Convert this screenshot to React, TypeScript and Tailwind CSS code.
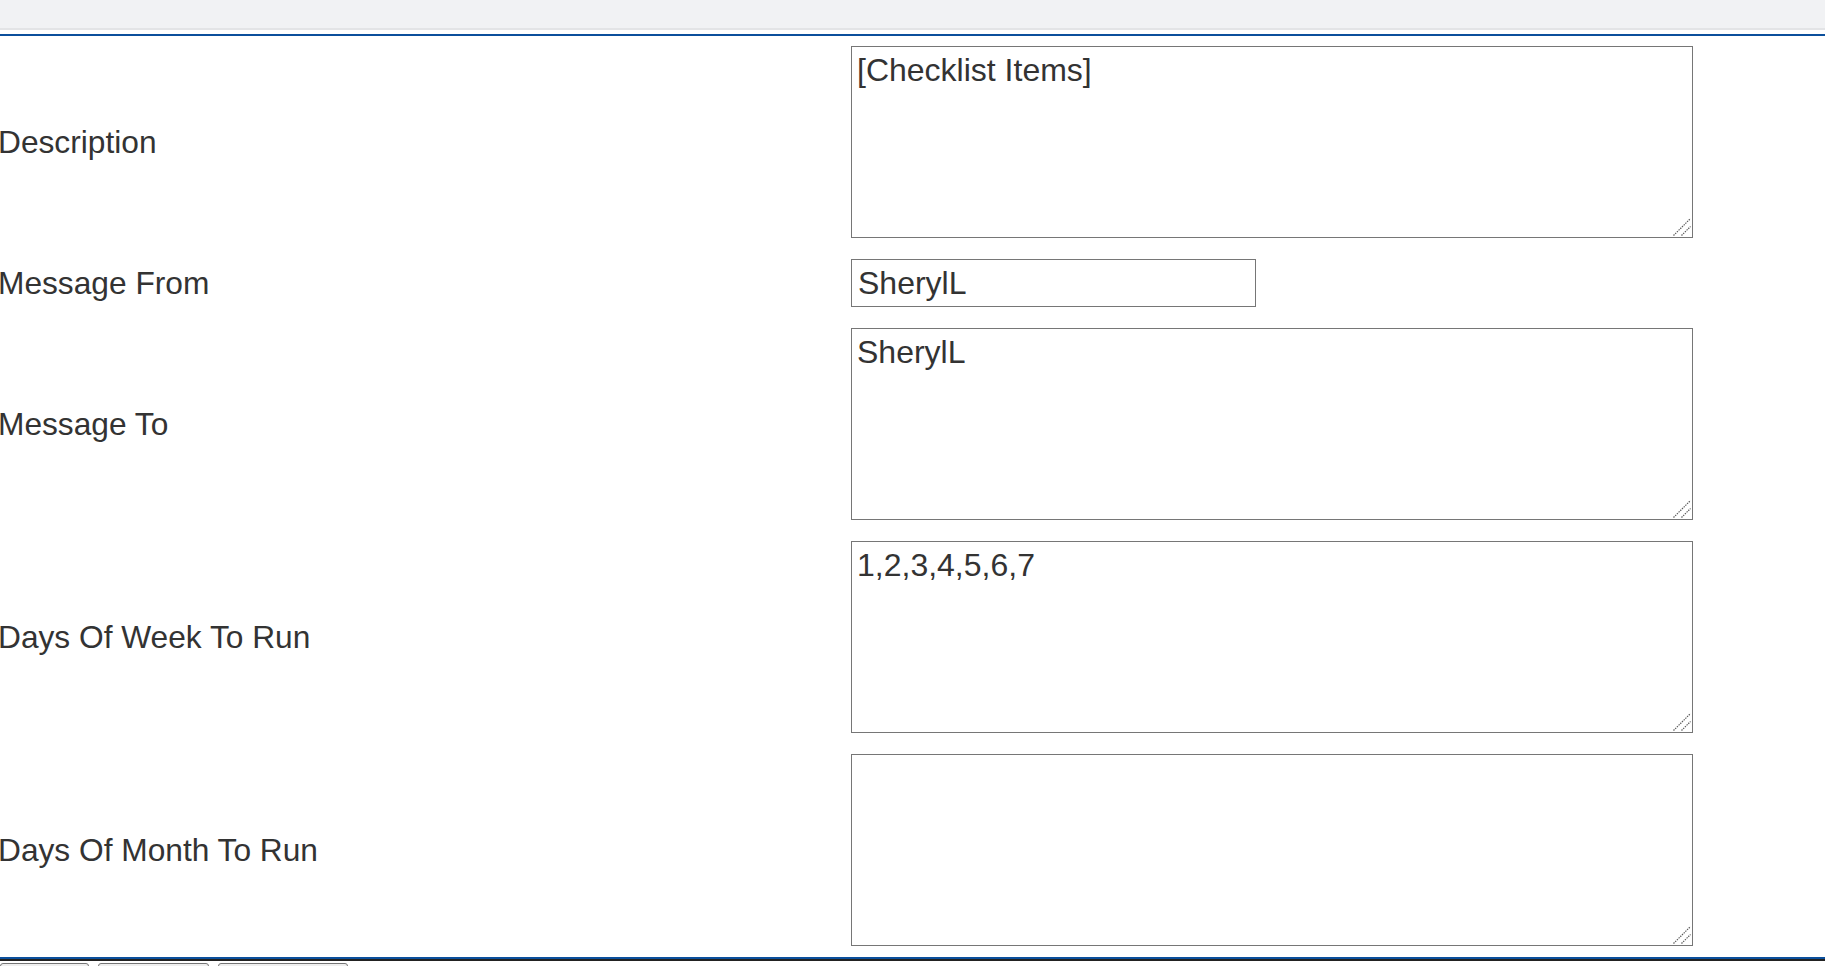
import React from "react";

const rows: { label: string; kind: "area" | "input"; value: string }[] = [
  { label: "Description", kind: "area", value: "[Checklist Items]" },
  { label: "Message From", kind: "input", value: "SherylL" },
  { label: "Message To", kind: "area", value: "SherylL" },
  { label: "Days Of Week To Run", kind: "area", value: "1,2,3,4,5,6,7" },
  { label: "Days Of Month To Run", kind: "area", value: "" },
];

function Grip() {
  return (
    <svg
      className="absolute right-[1px] bottom-[1px] pointer-events-none"
      width="20"
      height="20"
      viewBox="0 0 20 20"
    >
      <line x1="1.5" y1="18.5" x2="18.5" y2="1.5" stroke="#5a5a5a" strokeWidth="1.2" strokeDasharray="1.4 1" />
      <line x1="9.5" y1="18.5" x2="18.5" y2="9.5" stroke="#5a5a5a" strokeWidth="1.2" strokeDasharray="1.4 1" />
    </svg>
  );
}

export default function App() {
  return (
    <div className="w-[1825px] h-[966px] overflow-hidden bg-white font-['Liberation_Sans',Arial,sans-serif] text-[#333333]">
      <div className="h-[28px] bg-[#f1f2f4]" />
      <div className="h-[2px] bg-[#e3e4e6]" />
      <div className="h-[4px]" />
      <div className="h-[2px] bg-[#0b4f9c]" />
      <div className="flex flex-col gap-[21px] pt-[10px] pb-[11px]">
        {rows.map((r) => (
          <div key={r.label} className="flex items-center">
            <div className="w-[853px] -ml-[2px] shrink-0 text-[31.7px] leading-[1.15]">{r.label}</div>
            {r.kind === "area" ? (
              <div className="relative w-[842px] h-[192px]">
                <textarea
                  readOnly
                  defaultValue={r.value}
                  className="block w-full h-full resize-none border border-[#767676] bg-white pl-[5px] pt-[5px] text-[32px] leading-[1.15] text-[#333333] outline-none font-['Liberation_Sans',Arial,sans-serif]"
                />
                <Grip />
              </div>
            ) : (
              <input
                readOnly
                defaultValue={r.value}
                className="w-[405px] h-[48px] border border-[#767676] bg-white pl-[6px] text-[32px] leading-[1.15] text-[#333333] outline-none font-['Liberation_Sans',Arial,sans-serif]"
              />
            )}
          </div>
        ))}
      </div>
      <div className="h-[2px] bg-[#0b4f9c]" />
      <div className="h-[2px] bg-[#222222]" />
      <div className="flex gap-[9px] pt-[2px]">
        <div className="w-[89px] h-[30px] rounded-[3px] border border-[#767676] bg-[#efefef]" />
        <div className="w-[111px] h-[30px] rounded-[3px] border border-[#767676] bg-[#efefef]" />
        <div className="w-[130px] h-[30px] rounded-[3px] border border-[#767676] bg-[#efefef]" />
      </div>
    </div>
  );
}
